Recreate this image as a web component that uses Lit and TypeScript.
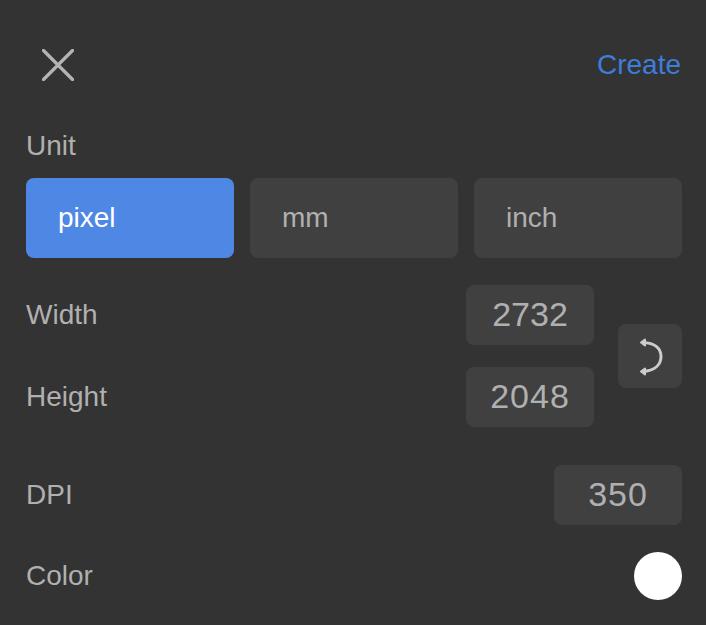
import { LitElement, html, css } from "lit";
import { customElement } from "lit/decorators.js";

@customElement("app-root")
export class AppRoot extends LitElement {
  static styles = css`
    :host { display: block; width: 706px; height: 625px; background: #333333; font-family: "Liberation Sans", Arial, sans-serif; color: #b0b0b0; overflow: hidden; }
    .panel { box-sizing: border-box; height: 625px; padding: 0 24px 0 26px; display: flex; flex-direction: column; }
    .head { height: 130px; padding-top: 40px; box-sizing: border-box; display: flex; justify-content: space-between; align-items: flex-start; }
    .close { width: 32px; height: 32px; margin: 9px 0 0 16px; }
    .create { color: #3d7ddb; font-size: 28px; line-height: 50px; margin-right: 1px; }
    .label { font-size: 28px; line-height: 32px; }
    .unit { height: 32px; margin-bottom: 16px; display: flex; align-items: center; }
    .units { display: grid; grid-template-columns: repeat(3, 208px); gap: 16px; }
    .seg { height: 80px; border-radius: 8px; background: #404040; font-size: 28px; line-height: 80px; padding-left: 32px; }
    .seg.on { background: #4f88e4; color: #fff; }
    .dims { display: flex; margin-top: 27px; gap: 24px; justify-content: flex-end; align-items: center; }
    .rows { flex: 1; display: flex; flex-direction: column; gap: 22px; }
    .row { display: flex; justify-content: space-between; align-items: center; }
    .box { width: 128px; height: 60px; border-radius: 8px; background: #404040; font-size: 34px; line-height: 58px; text-align: center; color: #b0b0b0; }
    .box.wide { letter-spacing: 1px; }
    .swap { width: 64px; height: 64px; border-radius: 8px; background: #404040; }
    .swap svg { display: block; }
    .dpi { margin-top: 38px; }
    .color { margin-top: 27px; }
    .dot { width: 48px; height: 48px; border-radius: 50%; background: #fff; }
  `;
  render() {
    return html`<div class="panel">
      <div class="head">
        <svg class="close" viewBox="0 0 32 32" fill="none" stroke="#b4b4b4" stroke-width="3.2" stroke-linecap="round"><path d="M1.5 1.5 30.5 30.5M30.5 1.5 1.5 30.5"/></svg>
        <span class="create">Create</span>
      </div>
      <div class="label unit">Unit</div>
      <div class="units"><div class="seg on">pixel</div><div class="seg">mm</div><div class="seg">inch</div></div>
      <div class="dims">
        <div class="rows">
          <div class="row"><span class="label">Width</span><div class="box">2732</div></div>
          <div class="row"><span class="label">Height</span><div class="box wide">2048</div></div>
        </div>
        <div class="swap"><svg width="64" height="64" viewBox="0 0 64 64" fill="none" stroke="#cccccc" stroke-width="3"><path d="M25 18.5C37 19 43 24.5 43 32.5S37 46.5 25 47.5"/><path d="M23 18.5 27 15.5V21.5ZM23 47.5 27 44.5V50.5Z" fill="#cccccc" stroke="#cccccc" stroke-width="2" stroke-linejoin="round"/></svg></div>
      </div>
      <div class="row dpi"><span class="label">DPI</span><div class="box wide">350</div></div>
      <div class="row color"><span class="label">Color</span><div class="dot"></div></div>
    </div>`;
  }
}
